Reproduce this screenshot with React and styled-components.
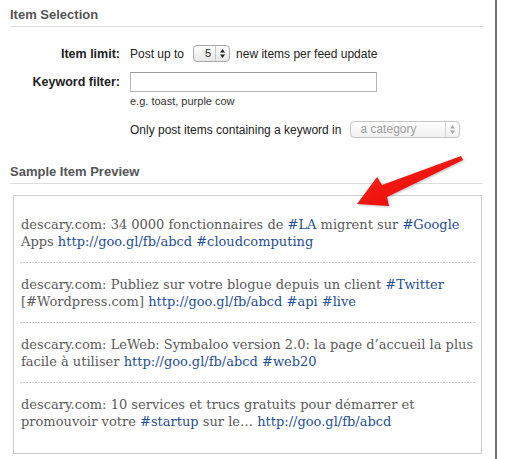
import React from 'react';
import styled, { createGlobalStyle } from 'styled-components';

const GlobalStyle = createGlobalStyle`
  html, body {
    margin: 0;
    padding: 0;
    background: #ffffff;
  }
  body {
    font-family: "Liberation Sans", Arial, sans-serif;
    font-size: 12px;
    color: #222;
  }
`;

const items = [
  [
    { t: 'descary.com: 34 0000 fonctionnaires de ' },
    { t: '#LA', link: true },
    { t: ' migrent sur ' },
    { t: '#Google', link: true },
    { t: ' Apps ' },
    { t: 'http://goo.gl/fb/abcd', link: true },
    { t: ' ' },
    { t: '#cloudcomputing', link: true },
  ],
  [
    { t: 'descary.com: Publiez sur votre blogue depuis un client ' },
    { t: '#Twitter', link: true },
    { t: ' [#Wordpress.com] ' },
    { t: 'http://goo.gl/fb/abcd', link: true },
    { t: ' ' },
    { t: '#api', link: true },
    { t: ' ' },
    { t: '#live', link: true },
  ],
  [
    { t: 'descary.com: LeWeb: Symbaloo version 2.0: la page d\u2019accueil la plus facile \u00e0 utiliser ' },
    { t: 'http://goo.gl/fb/abcd', link: true },
    { t: ' ' },
    { t: '#web20', link: true },
  ],
  [
    { t: 'descary.com: 10 services et trucs gratuits pour d\u00e9marrer et promouvoir votre ' },
    { t: '#startup', link: true },
    { t: ' sur le\u2026 ' },
    { t: 'http://goo.gl/fb/abcd', link: true },
  ],
];

const StepIcon = () => (
  <svg width="5" height="9" viewBox="0 0 5 9">
    <polygon points="2.5,0 5,3.5 0,3.5" fill="currentColor" />
    <polygon points="0,5.5 5,5.5 2.5,9" fill="currentColor" />
  </svg>
);

const App = () => {
  return (
    <>
      <GlobalStyle />
      <Page>
        <Section>
          <Heading>Item Selection</Heading>
          <Form>
            <Row>
              <Label>Item limit:</Label>
              <Field>
                Post up to
                <Select $width={37}>
                  <SelectValue>5</SelectValue>
                  <Stepper>
                    <StepIcon />
                  </Stepper>
                </Select>
                new items per feed update
              </Field>
            </Row>

            <Row $top={10}>
              <Label>Keyword filter:</Label>
              <TextInput type="text" />
            </Row>

            <Row $top={3}>
              <Label />
              <Hint>e.g. toast, purple cow</Hint>
            </Row>

            <Row $top={13}>
              <Label />
              <Field>
                Only post items containing a keyword in
                <Select $width={110} $disabled>
                  <SelectValue $disabled>a category</SelectValue>
                  <Stepper $disabled>
                    <StepIcon />
                  </Stepper>
                </Select>
              </Field>
            </Row>
          </Form>
        </Section>

        <Section $top={26}>
          <Heading>Sample Item Preview</Heading>
          <PreviewWrap>
            <Arrow viewBox="0 0 112 54" width="112" height="54">
              <defs>
                <linearGradient id="arrowFill" x1="0" y1="0" x2="1" y2="1">
                  <stop offset="0" stopColor="#ff2b20" />
                  <stop offset="1" stopColor="#e20000" />
                </linearGradient>
              </defs>
              <polygon
                points="2,50 22,23 27,31 106,2 108,6 32,43 34,52"
                fill="url(#arrowFill)"
              />
            </Arrow>
            <Preview>
              {items.map((parts, i) => (
                <Entry key={i} $last={i === items.length - 1}>
                  {parts.map((p, j) =>
                    p.link ? <Link key={j}>{p.t}</Link> : <React.Fragment key={j}>{p.t}</React.Fragment>
                  )}
                </Entry>
              ))}
            </Preview>
          </PreviewWrap>
        </Section>
      </Page>
    </>
  );
};

const Page = styled.div`
  width: 497px;
  min-height: 459px;
  padding: 7px 12px 0 10px;
  box-sizing: border-box;
  border-right: 2px solid #707070;
`;

const Section = styled.div`
  margin-top: ${(p) => p.$top || 0}px;
`;

const Heading = styled.h2`
  margin: 0;
  font-size: 13px;
  font-weight: bold;
  color: #555;
  line-height: 16px;
  padding-bottom: 3px;
  border-bottom: 1px solid #dcdcdc;
`;

const Form = styled.div`
  padding-top: 18px;
`;

const Row = styled.div`
  display: flex;
  align-items: center;
  gap: 10px;
  margin-top: ${(p) => p.$top || 0}px;
`;

const Label = styled.div`
  width: 110px;
  flex: none;
  text-align: right;
  font-weight: bold;
  font-size: 12.5px;
  color: #222;
`;

const Field = styled.div`
  display: flex;
  align-items: center;
  gap: 6px;
  font-size: 12px;
  color: #222;
`;

const Select = styled.div`
  display: inline-flex;
  align-items: stretch;
  width: ${(p) => p.$width}px;
  height: 17px;
  box-sizing: border-box;
  border: 1px solid ${(p) => (p.$disabled ? '#c4c4c4' : '#a8a8a8')};
  border-radius: 4px;
  background: linear-gradient(#ffffff, ${(p) => (p.$disabled ? '#f0f0f0' : '#e6e6e6')});
  margin-left: 3px;
`;

const SelectValue = styled.span`
  flex: 1;
  display: flex;
  align-items: center;
  padding-left: ${(p) => (p.$disabled ? 9 : 11)}px;
  font-size: ${(p) => (p.$disabled ? 12 : 11)}px;
  color: ${(p) => (p.$disabled ? '#a0a0a0' : '#222')};
  line-height: 15px;
`;

const Stepper = styled.span`
  width: 13px;
  display: flex;
  align-items: center;
  justify-content: center;
  border-left: 1px solid ${(p) => (p.$disabled ? '#d6d6d6' : '#c8c8c8')};
  color: ${(p) => (p.$disabled ? '#aaa' : '#222')};
`;

const TextInput = styled.input`
  width: 247px;
  height: 20px;
  box-sizing: border-box;
  border: 1px solid #b5b5b5;
  border-top-color: #999;
  padding: 0 4px;
  margin: 0;
  font-family: inherit;
  font-size: 12px;
  outline: none;
`;

const Hint = styled.div`
  font-size: 11px;
  line-height: 13px;
  color: #333;
`;

const PreviewWrap = styled.div`
  position: relative;
  padding-top: 11px;
`;

const Arrow = styled.svg`
  position: absolute;
  left: 345px;
  top: -30px;
  filter: drop-shadow(1px 1px 1px rgba(0, 0, 0, 0.25));
  pointer-events: none;
`;

const Preview = styled.div`
  margin-left: 3px;
  width: 469px;
  box-sizing: border-box;
  border: 1px solid #cfcfcf;
  padding: 7px 5px 10px 6px;
  font-family: "DejaVu Serif", Georgia, serif;
  font-size: 13px;
  line-height: 17px;
  color: #5a5a5a;
`;

const Entry = styled.div`
  padding: 13px 0 13px 1px;
  background-image: ${(p) =>
    p.$last ? 'none' : 'linear-gradient(to right, #c8c8c8 2px, transparent 2px)'};
  background-size: 3px 1px;
  background-repeat: repeat-x;
  background-position: left bottom;
`;

const Link = styled.span`
  color: #1f4f93;
`;

export default App;
